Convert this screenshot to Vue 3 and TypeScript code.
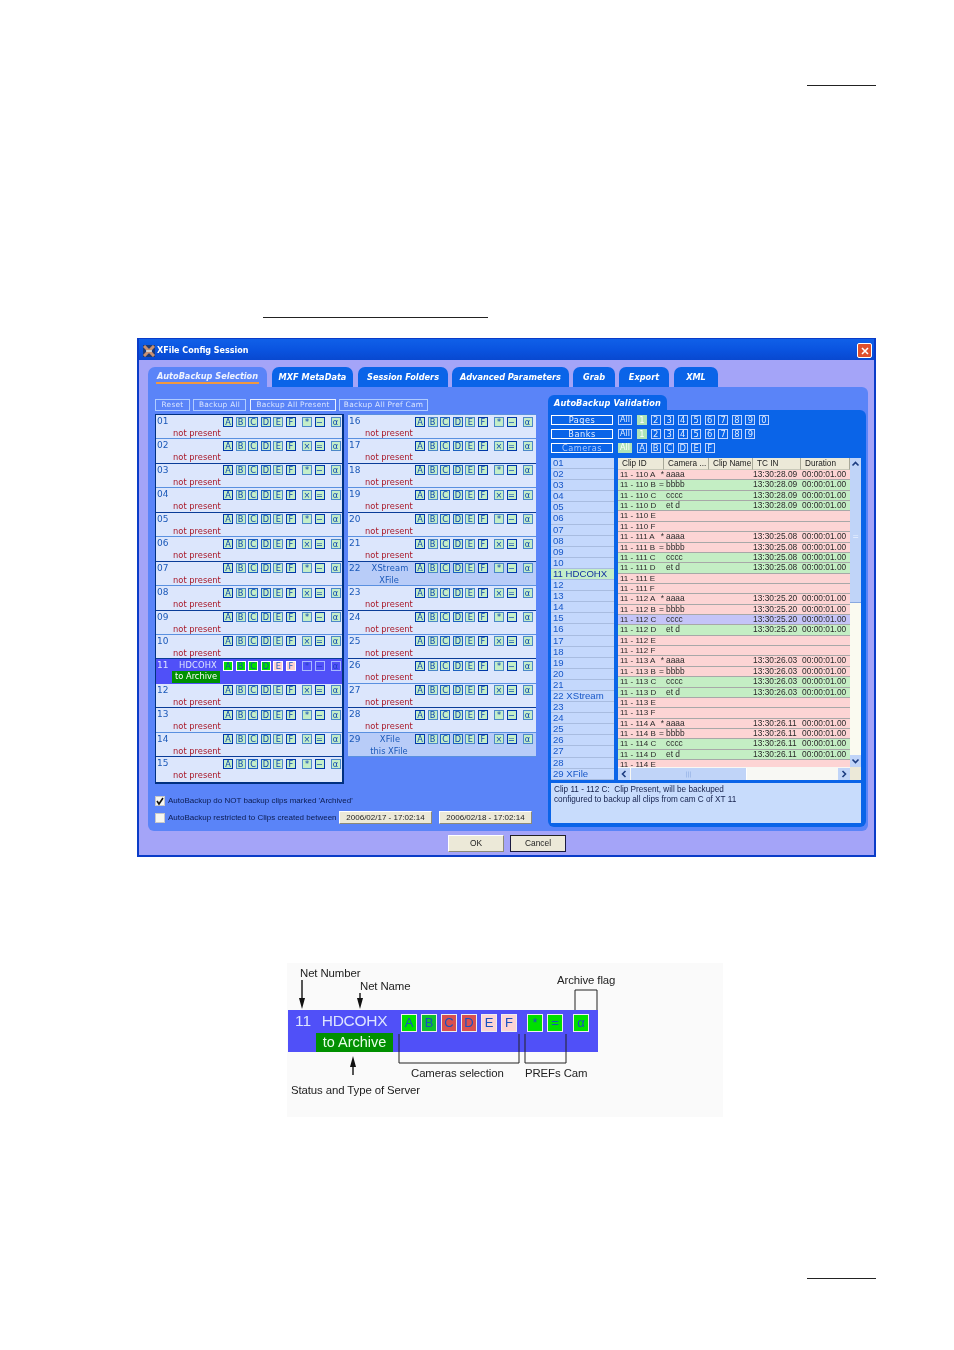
<script setup lang="ts">
interface Net { n: string; name?: string; sub?: string; kind?: string }
const names: Record<string, Net> = {
  '11': { n: '11', name: 'HDCOHX', sub: 'to Archive', kind: 'active' },
  '22': { n: '22', name: 'XStream', sub: 'XFile', kind: 'server' },
  '29': { n: '29', name: 'XFile', sub: 'this XFile', kind: 'server' },
}
const pad = (i: number) => String(i).padStart(2, '0')
const makeNets = (a: number, b: number): Net[] => {
  const out: Net[] = []
  for (let i = a; i <= b; i++) out.push(names[pad(i)] ?? { n: pad(i), sub: 'not present' })
  return out
}
const leftNets = makeNets(1, 15)
const rightNets = makeNets(16, 29)
const allNets = makeNets(1, 29).map((n) => ({ ...n, label: n.name ? `${n.n} ${n.name}` : n.n }))
const cams = ['A', 'B', 'C', 'D', 'E', 'F']
const tones = ['dark', 'light', 'mid', 'mid', 'light', 'dark']
const tabs = ['AutoBackup Selection', 'MXF MetaData', 'Session Folders', 'Advanced Parameters', 'Grab', 'Export', 'XML']
const actions = ['Reset', 'Backup All', 'Backup All Present', 'Backup All Pref Cam']
const pickers = [
  { label: 'Pages', items: ['1', '2', '3', '4', '5', '6', '7', '8', '9', '0'], on: '1' },
  { label: 'Banks', items: ['1', '2', '3', '4', '5', '6', '7', '8', '9'], on: '1' },
  { label: 'Cameras', items: cams, on: 'All' },
]
const blocks = [
  { id: '110', tc: '13:30:28.09', st: 'pggg' },
  { id: '111', tc: '13:30:25.08', st: 'ppgg' },
  { id: '112', tc: '13:30:25.20', st: 'ppsg' },
  { id: '113', tc: '13:30:26.03', st: 'ppgg' },
  { id: '114', tc: '13:30:26.11', st: 'ppgg' },
]
const clipNames = ['aaaa', 'bbbb', 'cccc', 'et d']
const marks = ['*', '=', '', '']
const clips = blocks.flatMap((b) =>
  cams.map((c, i) => ({
    id: `11 - ${b.id} ${c}`,
    mark: marks[i] ?? '',
    name: clipNames[i] ?? '',
    tc: i < 4 ? b.tc : '',
    dur: i < 4 ? '00:00:01.00' : '',
    cls: i < 4 ? b.st[i] : 'p',
  })),
).slice(0, 29)
const columns = ['Clip ID', 'Camera ...', 'Clip Name', 'TC IN', 'Duration']
const figCams = [
  { t: 'A', c: 'g' }, { t: 'B', c: 'g2' }, { t: 'C', c: 'r' }, { t: 'D', c: 'r' }, { t: 'E', c: 'p' }, { t: 'F', c: 'p' },
]
</script>

<template>
  <main class="page">
    <div class="rule top-rule"></div>
    <div class="rule mid-rule"></div>

    <section class="win">
      <header class="title">
        <svg class="logo" viewBox="0 0 12 12" width="12" height="12">
          <rect width="12" height="12" fill="#1c3a78" />
          <path d="M1 1 L11 11 M11 1 L1 11" stroke="#c89070" stroke-width="3" />
          <path d="M3 6 L9 6" stroke="#d8e0e8" stroke-width="1.5" />
        </svg>
        <span class="title-text">XFile Config Session</span>
        <span class="close">
          <svg viewBox="0 0 14 14" width="14" height="14"><path d="M4 4 L10 10 M10 4 L4 10" stroke="#fff" stroke-width="1.6" /></svg>
        </span>
      </header>

      <nav class="tabs">
        <span v-for="(t, i) in tabs" :key="t" class="tab" :class="[{ on: i === 0 }, 'tab' + i]"><em>{{ t }}</em></span>
      </nav>

      <div class="panel">
        <div class="left">
          <div class="actions">
            <span v-for="(a, i) in actions" :key="a" class="act" :class="'act' + i">{{ a }}</span>
          </div>
          <div class="lists">
            <div v-for="(list, li) in [leftNets, rightNets]" :key="li" class="list" :class="{ first: li === 0 }">
              <div v-for="(net, r) in list" :key="net.n" class="net" :class="[net.kind, { even: r % 2 === 1 }]">
                <span class="num">{{ net.n }}</span>
                <span class="name">{{ net.name }}</span>
                <div class="btns">
                  <b v-for="(c, ci) in cams" :key="c" class="bt" :class="[tones[ci], net.kind === 'active' ? (ci < 4 ? 'ong' : 'onp') : '']">{{ c }}</b>
                  <b class="bt light gap" :class="{ onb: net.kind === 'active' }">{{ r % 2 ? '×' : '*' }}</b>
                  <b class="bt dark" :class="{ onb: net.kind === 'active' }">{{ r % 2 ? '=' : '−' }}</b>
                  <b class="bt light gap" :class="{ onb: net.kind === 'active' }">α</b>
                </div>
                <span class="sub" :class="{ np: !net.kind, arch: net.kind === 'active' }">{{ net.sub }}</span>
              </div>
            </div>
          </div>
          <label class="check c1">
            <span class="box"><svg viewBox="0 0 10 10" width="10" height="10"><path d="M2 5 L4 8 L8 2" fill="none" stroke="#111" stroke-width="1.6" /></svg></span>
            AutoBackup do NOT backup clips marked 'Archived'
          </label>
          <div class="check c2">
            <span class="box"></span>
            <span class="chk-txt">AutoBackup restricted to Clips created between</span>
            <span class="date">2006/02/17 - 17:02:14</span>
            <span class="date">2006/02/18 - 17:02:14</span>
          </div>
        </div>

        <div class="right">
          <div class="vtab"><em>AutoBackup Validation</em></div>
          <div class="vbody">
            <div v-for="p in pickers" :key="p.label" class="pick">
              <span class="plabel" :class="{ dim: p.label === 'Cameras' }">{{ p.label }}</span>
              <span class="pb all" :class="{ sel: p.on === 'All' }">All</span>
              <span v-for="it in p.items" :key="it" class="pb" :class="{ sel: p.on === it }">{{ it }}</span>
            </div>
            <div class="browse">
              <div class="nets">
                <div v-for="net in allNets" :key="net.n" class="nrow" :class="{ hot: net.kind === 'active' }">{{ net.label }}</div>
              </div>
              <div class="table">
                <div class="tmain">
                  <div class="thead"><span v-for="c in columns" :key="c" class="th">{{ c }}</span></div>
                  <div class="tbody">
                    <div v-for="c in clips" :key="c.id" class="tr" :class="c.cls">
                      <span class="td id">{{ c.id }}</span>
                      <span class="td mark">{{ c.mark }}</span>
                      <span class="td nm">{{ c.name }}</span>
                      <span class="td tc">{{ c.tc }}</span>
                      <span class="td du">{{ c.dur }}</span>
                    </div>
                  </div>
                  <div class="hbar">
                    <span class="arrow"><svg viewBox="0 0 12 12" width="12" height="12"><path d="M7.5 3 L4.5 6 L7.5 9" fill="none" stroke="#1c3c80" stroke-width="1.6" /></svg></span>
                    <span class="hthumb">|||</span>
                    <span class="arrow end"><svg viewBox="0 0 12 12" width="12" height="12"><path d="M4.5 3 L7.5 6 L4.5 9" fill="none" stroke="#1c3c80" stroke-width="1.6" /></svg></span>
                  </div>
                </div>
                <div class="vbar">
                  <span class="arrow"><svg viewBox="0 0 11 12" width="11" height="12"><path d="M2.5 7.5 L5.5 4.5 L8.5 7.5" fill="none" stroke="#1c3c80" stroke-width="1.6" /></svg></span>
                  <span class="vthumb">=</span>
                  <span class="arrow down"><svg viewBox="0 0 11 12" width="11" height="12"><path d="M2.5 4.5 L5.5 7.5 L8.5 4.5" fill="none" stroke="#1c3c80" stroke-width="1.6" /></svg></span>
                  <span class="corner"></span>
                </div>
              </div>
            </div>
            <div class="info">
              Clip 11 - 112 C:&nbsp; Clip Present, will be backuped<br />
              configured to backup all clips from cam C of XT 11
            </div>
          </div>
        </div>
      </div>

      <footer class="foot">
        <span class="push">OK</span>
        <span class="push cancel">Cancel</span>
      </footer>
    </section>

    <section class="fig">
      <svg class="ann" viewBox="0 0 436 154" width="436" height="154">
        <g fill="none" stroke="#222" stroke-width="1">
          <path d="M288 47 V27 H310 V47" />
          <path d="M112 71 V100 H232 V71" />
          <path d="M238 71 V100 H279 V71" />
        </g>
        <g fill="none" stroke="#111" stroke-width="1.4">
          <path d="M15 17 V38 M73 30 V38 M66 112 V100" />
        </g>
        <g fill="#111">
          <path d="M12 35 H18 L15 46 Z" />
          <path d="M70 35 H76 L73 46 Z" />
          <path d="M63 104 H69 L66 93 Z" />
        </g>
      </svg>
      <span class="lab l1">Net Number</span>
      <span class="lab l2">Net Name</span>
      <span class="lab l3">Archive flag</span>
      <span class="lab l4">Cameras selection</span>
      <span class="lab l5">PREFs Cam</span>
      <span class="lab l6">Status and Type of Server</span>
      <div class="bar">
        <span class="bnum">11</span>
        <span class="bname">HDCOHX</span>
        <div class="bbtns">
          <b v-for="c in figCams" :key="c.t" class="fb" :class="c.c">{{ c.t }}</b>
          <b class="fb g gap1">*</b>
          <b class="fb g">=</b>
          <b class="fb g gap2">α</b>
        </div>
        <span class="bsub">to Archive</span>
      </div>
    </section>

    <div class="rule bottom-rule"></div>
  </main>
</template>

<style scoped>
.page { width: 954px; height: 1350px; background: #fff; overflow: hidden; display: flex; flex-direction: column; font-family: "DejaVu Sans", sans-serif; }
.rule { height: 1px; background: #222; }
.top-rule { width: 69px; margin: 85px 0 0 807px; }
.mid-rule { width: 225px; margin: 231px 0 0 263px; }
.bottom-rule { width: 69px; margin: 161px 0 0 807px; }

.win { width: 739px; height: 519px; margin: 20px 0 0 137px; box-sizing: border-box; background: #a4a4f8; border: 1px solid #0a3cc8; border-width: 1px 2px 2px; display: flex; flex-direction: column; filter: blur(0.3px); }
.title { height: 21px; flex: none; box-sizing: border-box; display: flex; align-items: center; padding: 2px 2px 0 4px; gap: 2px; background: linear-gradient(#1060e8, #0a54e0 50%, #0848d0); }
.title-text { font: bold 8px "DejaVu Sans", sans-serif; color: #fff; }
.logo { flex: none; }
.close { margin-left: auto; width: 15px; height: 15px; background: #e0502c; border: 1px solid #fff; border-radius: 2px; box-sizing: border-box; display: flex; align-items: center; justify-content: center; }
.close svg { flex: none; }

.tabs { height: 20px; margin: 7px 0 0 9px; display: flex; flex: none; }
.tab { height: 20px; box-sizing: border-box; background: #0a64e8; border-radius: 7px 7px 0 0; color: #fff; display: flex; justify-content: center; align-items: center; font: bold 8.2px "DejaVu Sans", sans-serif; }
.tab em { font-style: italic; }
.tab.on { background: #5a84f8; }
.tab.on em { border-bottom: 2px solid #f09840; color: #eef2ff; padding: 0 1px 1px; }
.tab0 { width: 119px; margin-right: 5px; }
.tab1 { width: 81px; margin-right: 5px; }
.tab2 { width: 90px; margin-right: 4px; }
.tab3 { width: 117px; margin-right: 4px; }
.tab4 { width: 42px; margin-right: 4px; }
.tab5 { width: 50px; margin-right: 5px; }
.tab6 { width: 44px; }

.panel { width: 720px; height: 444px; flex: none; margin-left: 9px; background: #5a84f8; border-radius: 0 6px 6px 6px; display: flex; }
.left { width: 400px; flex: none; padding: 12px 0 0 7px; box-sizing: border-box; }
.actions { display: flex; height: 12px; }
.act { box-sizing: border-box; height: 12px; border: 1px solid #b0ccff; color: #d8e4ff; font-size: 7.4px; line-height: 10px; text-align: center; letter-spacing: .25px; }
.act0 { width: 35px; margin-right: 3px; }
.act1 { width: 53px; margin-right: 4px; }
.act2 { width: 86px; margin-right: 3px; border-color: #e8f0ff; }
.act3 { width: 89px; }

.lists { display: flex; gap: 4px; margin-top: 3px; align-items: flex-start; }
.list { width: 188px; box-sizing: border-box; border-top: 1px solid #5a90e0; background: #dce6fc; }
.list.first { width: 189px; border: 1px solid #003080; border-width: 1px 2px 2px 1px; }
.net { height: 24.45px; box-sizing: border-box; display: grid; grid-template-columns: 16px 50px 1fr; grid-template-rows: 12px 12px; border-bottom: 1px solid #5a90e0; align-items: center; font-size: 8.3px; color: #1a58b8; overflow: hidden; padding-left: 1px; }
.net.even { border-bottom-color: #0a3c98; }
.net:last-child { border-bottom: 0; }
.list:not(.first) .net:last-child { border-bottom: 1px solid #5a90e0; }
.net.server { background: #b8ccf8; }
.net.active { background: #5050f8; color: #dde4ff; border-bottom-color: #5050f8; }
.num { font-size: 9px; }
.name { text-align: center; white-space: nowrap; letter-spacing: .15px; }
.btns { grid-column: 3; grid-row: 1; display: flex; gap: 2.6px; padding-top: 1px; }
.bt { width: 10px; height: 10px; flex: none; box-sizing: border-box; border: 1px solid #0c48b0; background: #c4eec8; color: #0c44b0; font: 400 8.2px/8px "DejaVu Sans", sans-serif; text-align: center; }
.bt.dark { border-color: #0038a8; }
.bt.mid { border-color: #1c60c0; }
.bt.light { border-color: #4c88c8; }
.bt.gap { margin-left: 3.4px; }
.bt.ong { background: #00e000; border-color: #fff; color: #1050a0; }
.bt.onp { background: #fcd0d0; border-color: #fff; color: #2060c0; }
.bt.onb { background: #5050f8; border-color: #a8b8ff; color: #2040c0; }
.sub { grid-column: 1 / 3; grid-row: 2; margin-left: 15px; width: 50px; text-align: center; white-space: nowrap; font-size: 8.3px; }
.sub.np { color: #a81828; }
.sub.arch { background: #009000; color: #fff; height: 12px; line-height: 11px; width: 48px; margin-left: 15px; }

.check { display: flex; align-items: center; font: 8px "Liberation Sans", sans-serif; color: #0c1c50; }
.c1 { margin-top: 11.5px; height: 11px; gap: 3px; }
.c2 { margin-top: 5px; height: 13px; gap: 3px; }
.box { width: 10px; height: 10px; flex: none; background: #f6f6f0; border: 1px solid #c8c8c8; box-sizing: border-box; display: flex; align-items: center; justify-content: center; }
.box svg { flex: none; }
.chk-txt { width: 168px; white-space: nowrap; }
.date { width: 93px; height: 13px; margin-right: 4px; box-sizing: border-box; background: #ece9d8; border: 1px solid #fff; border-right-color: #8c8a78; border-bottom-color: #8c8a78; text-align: center; line-height: 11px; color: #222; }

.right { width: 318px; flex: none; padding-top: 8px; }
.vtab { width: 119px; height: 15px; background: #0a64e8; border-radius: 6px 6px 0 0; color: #fff; display: flex; align-items: center; padding-left: 6px; box-sizing: border-box; font: bold 8.2px "DejaVu Sans", sans-serif; letter-spacing: .1px; }
.vbody { height: 417px; box-sizing: border-box; background: #0a64e8; border-radius: 0 6px 6px 6px; padding: 5px 5px 4px 3px; }
.pick { display: flex; align-items: center; height: 10px; margin-bottom: 4px; }
.plabel { width: 62px; height: 10px; box-sizing: border-box; border: 1px solid #fff; color: #e8f0ff; text-align: center; font-size: 8.2px; line-height: 8px; margin-right: 5px; letter-spacing: .5px; }
.plabel.dim { color: #a8c8ff; }
.pb { width: 10px; height: 10px; box-sizing: border-box; border: 1px solid #c0d4ff; color: #e0ecff; font: 8.4px/8px "DejaVu Sans", sans-serif; text-align: center; margin-right: 3.55px; flex: none; }
.pb.all { width: 14px; margin-right: 5px; font-size: 8px; }
.pb.sel { background: #b0e4b8; border-color: #b0e4b8; color: #fff; }
.browse { display: flex; gap: 4px; margin-top: 5px; height: 322px; }
.nets { width: 63px; flex: none; background: #c4d8fc; overflow: hidden; }
.nrow { height: 11.1px; box-sizing: border-box; border-bottom: 1px solid #a8bce0; padding-left: 2px; font: 9.6px/10.5px "Liberation Sans", sans-serif; color: #1858c8; white-space: nowrap; }
.nrow.hot { background: #c4eec8; color: #1030a0; }
.table { width: 243px; flex: none; display: flex; background: #fff; }
.tmain { width: 232px; flex: none; display: flex; flex-direction: column; }
.thead { height: 12px; flex: none; display: grid; grid-template-columns: 46px 45px 44px 48px 49px; background: #ece9d8; }
.th { font: 8.2px/11px "Liberation Sans", sans-serif; color: #222; border-right: 1px solid #a8a898; border-bottom: 1px solid #c8c8b8; padding-left: 4px; white-space: nowrap; overflow: hidden; box-sizing: border-box; }
.tbody { flex: 1; overflow: hidden; min-height: 0; }
.tr { height: 10.37px; box-sizing: border-box; border-bottom: 1px solid #a8a8a8; display: grid; grid-template-columns: 39px 8px 88px 49px 48px; font: 8.4px/9.5px "Liberation Sans", sans-serif; color: #2a2a2a; white-space: nowrap; }
.tr.p { background: #fdd4d4; }
.tr.g { background: #c4eec4; }
.tr.s { background: #c4c4f8; }
.td { overflow: hidden; }
.id { padding-left: 2px; font-size: 8px; }
.mark { text-align: right; padding-right: 1px; }
.nm { padding-left: 1px; }
.hbar { height: 13px; flex: none; display: flex; align-items: center; background: #f8f8f4; }
.arrow { width: 12px; height: 12px; flex: none; background: #c0d4f8; display: flex; }
.arrow svg { flex: none; }
.arrow.end { margin-left: auto; }
.hthumb { width: 115px; height: 12px; background: #c0d4f8; border-right: 1px solid #fff; margin-left: 1px; text-align: center; font: 6px/12px "DejaVu Sans", sans-serif; color: #88a8e0; }
.vbar { width: 11px; flex: none; display: flex; flex-direction: column; background: #fafaf0; }
.vbar .arrow { width: 11px; }
.vthumb { height: 133px; flex: none; box-sizing: border-box; background: #c0d4f8; border-bottom: 1px solid #88a8e0; text-align: center; font: 8px/133px "DejaVu Sans", sans-serif; color: #e8f0ff; }
.vbar .down { margin-top: auto; }
.corner { height: 13px; flex: none; background: #ece9d8; }
.info { height: 40px; margin-top: 3px; background: #c8dcfc; box-sizing: border-box; padding: 2px 3px; font: 8.2px/10px "Liberation Sans", sans-serif; color: #14204c; width: 310px; }

.foot { display: flex; margin: 4px 0 0 309px; gap: 6px; }
.push { width: 56px; height: 17px; box-sizing: border-box; background: #ece9d8; border: 1px solid #fff; border-right-color: #8c8a78; border-bottom-color: #8c8a78; text-align: center; font: 8.4px/15px "Liberation Sans", sans-serif; color: #222; }
.push.cancel { border: 1px solid #1a1a40; border-top-color: #222; }

.fig { position: relative; width: 436px; height: 154px; margin: 106px 0 0 287px; background: #fafafa; filter: blur(0.35px); }
.ann { position: absolute; left: 0; top: 0; z-index: 2; }
.lab { position: absolute; z-index: 2; font: 11.4px/14px "Liberation Sans", sans-serif; color: #222; white-space: nowrap; letter-spacing: -.1px; }
.l1 { left: 13px; top: 3px; }
.l2 { left: 73px; top: 16px; }
.l3 { left: 270px; top: 10px; }
.l4 { left: 124px; top: 103px; }
.l5 { left: 238px; top: 103px; }
.l6 { left: 4px; top: 120px; }
.bar { position: absolute; left: 1px; top: 47px; width: 310px; height: 42px; background: #5050f8; display: grid; grid-template-columns: 21px 77px 1fr; grid-template-rows: 23px 19px; padding-left: 7px; box-sizing: border-box; color: #dde4ff; font: 15.5px/22px "Liberation Sans", sans-serif; }
.bnum { grid-row: 1; grid-column: 1; }
.bname { grid-row: 1; grid-column: 2; text-align: center; letter-spacing: -.3px; }
.bsub { grid-row: 2; grid-column: 2; background: #009000; color: #e8ffe8; text-align: center; line-height: 18px; font-size: 14.5px; }
.bbtns { grid-row: 1; grid-column: 3; display: flex; gap: 4px; padding: 4px 0 0 8px; }
.fb { width: 16px; height: 18px; flex: none; box-sizing: border-box; border: 1px solid #eee; font: 400 13px/16px "Liberation Sans", sans-serif; text-align: center; color: #1850c0; }
.fb.g { background: #00e000; }
.fb.g2 { background: #10c030; }
.fb.r { background: #d85050; }
.fb.p { background: #fcd4d4; }
.gap1 { margin-left: 6px; }
.gap2 { margin-left: 6px; }
</style>

<style>
html, body { margin: 0; background: #fff; }
</style>
